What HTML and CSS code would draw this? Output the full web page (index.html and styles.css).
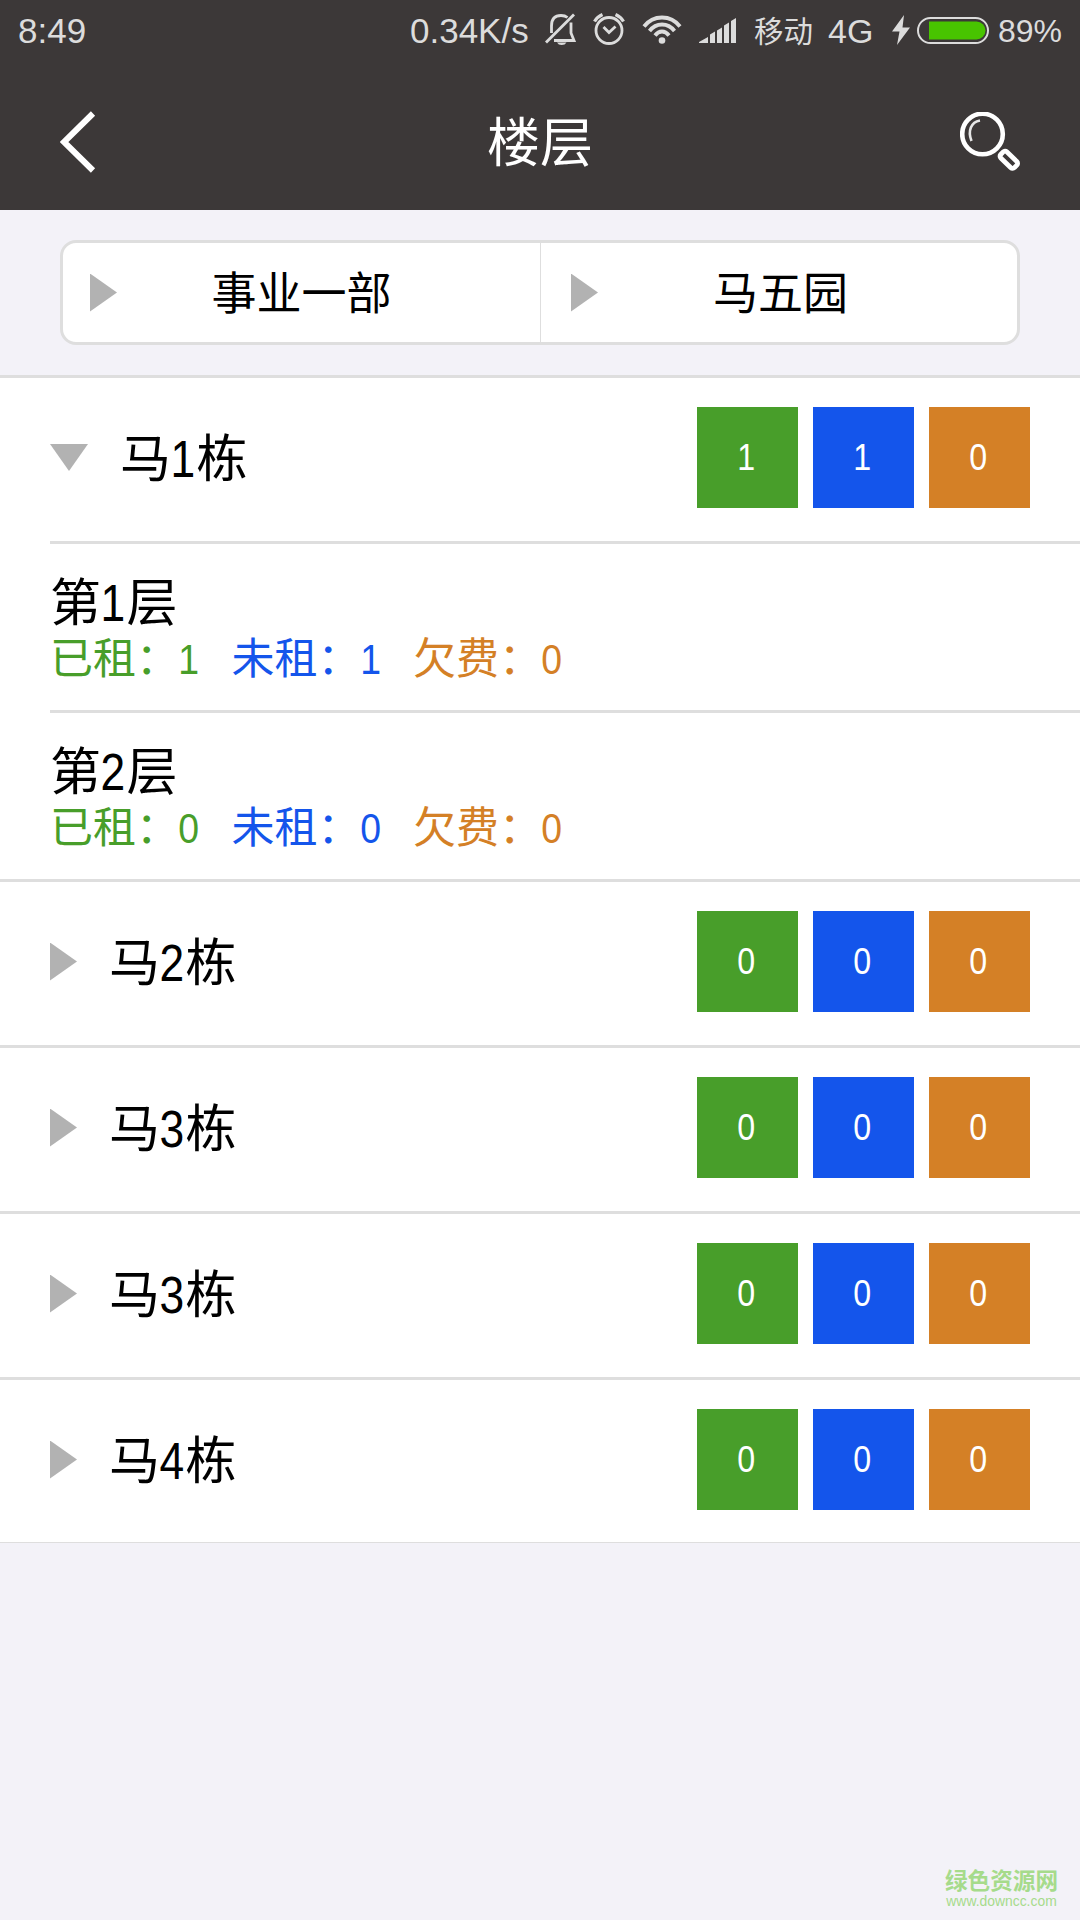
FILE: index.html
```html
<!DOCTYPE html>
<html lang="zh-CN">
<head>
    <meta charset="UTF-8">
    <meta name="viewport" content="width=device-width, initial-scale=1.0">
    <title>楼层</title>
    <link rel="stylesheet" href="styles.css">
</head>
<body>
    <header class="header">
        <div class="status-bar">
            <span class="time">8:49</span>
            <span class="speed">0.34K/s</span>
            <svg class="icon-bell" width="32" height="32" viewBox="0 0 32 32">
                <path d="M6.500 20V13C6.500 6 10 2.500 16 2.500Q20 2.500 22.500 4.500" fill="none" stroke="#dcdcdc" stroke-width="2.800"/>
                <path d="M26 9.500V20L29 27.500H9" fill="none" stroke="#dcdcdc" stroke-width="2.800"/>
                <path d="M1 29.500L29 1.500" stroke="#dcdcdc" stroke-width="2.800"/>
                <path d="M12 29.500H21.500Q20 32 16.700 32T12 29.500z" fill="#dcdcdc"/>
            </svg>
            <svg class="icon-alarm" width="32" height="32" viewBox="0 0 32 32">
                <circle cx="16" cy="17.500" r="13" fill="none" stroke="#dcdcdc" stroke-width="2.800"/>
                <path d="M10.500 14L16 19.500L22.500 13.500" fill="none" stroke="#dcdcdc" stroke-width="2.800"/>
                <path d="M1.500 8.500Q4 4 9.500 1.500M30.500 8.500Q28 4 22.500 1.500" fill="none" stroke="#dcdcdc" stroke-width="3.200"/>
            </svg>
            <svg class="icon-wifi" width="40" height="30" viewBox="0 0 40 30">
                <g fill="none" stroke="#dcdcdc" stroke-width="3.800">
                    <path d="M2 11.500Q9 2.500 20 2.500T38 11.500"/>
                    <path d="M7.500 16Q12.500 9.500 20 9.500T32.500 16"/>
                    <path d="M13 20.500Q16 16.500 20 16.500T27 20.500"/>
                </g>
                <circle cx="20" cy="25.500" r="3.300" fill="#dcdcdc"/>
            </svg>
            <svg class="icon-signal" width="37" height="25" viewBox="0 0 37 25">
                <path d="M0 25V24L9 19V25zM11 25V16.500L16 13.500V25zM18 25V12.500L23 9.500V25zM25 25V7.500L30 4.500V25zM32 25V3L37 0V25z" fill="#dcdcdc"/>
            </svg>
            <span class="carrier">移动</span>
            <span class="network">4G</span>
            <svg class="icon-bolt" width="18" height="30" viewBox="0 0 18 30">
                <path d="M12 0L0 16.500H7.500L5 30L18 12.500H10.500z" fill="#dcdcdc"/>
            </svg>
            <svg class="icon-battery" width="72" height="27" viewBox="0 0 72 27">
                <rect x="1" y="1" width="70" height="25" rx="12.500" fill="none" stroke="#dcdcdc" stroke-width="2"/>
                <path d="M12 4.500H59.500A9 9 0 0 1 59.500 22.500H12z" fill="#48c400"/>
            </svg>
            <span class="percent">89%</span>
        </div>
        <div class="nav-bar">
            <svg class="icon-back" width="36" height="62" viewBox="0 0 36 62">
                <path d="M33 2.500L4 31L33 59.500" fill="none" stroke="#fff" stroke-width="6"/>
            </svg>
            <h1>楼层</h1>
            <svg class="icon-search" width="60" height="60" viewBox="0 0 60 60">
                <circle cx="22.500" cy="22" r="20.300" fill="none" stroke="#fff" stroke-width="4.600"/>
                <path d="M20 8.500C11 10 7.500 19 11.500 29" fill="none" stroke="#e6e6e6" stroke-width="2.600"/>
                <rect x="-9.500" y="-4.300" width="19" height="8.600" rx="2.500" transform="translate(48.800 47.800) rotate(44)" fill="none" stroke="#fff" stroke-width="4.800"/>
            </svg>
        </div>
    </header>

    <div class="filter-bar">
        <div class="filter">
            <div class="filter-item">
                <i class="arrow-right"></i>
                <span>事业一部</span>
            </div>
            <div class="filter-item">
                <i class="arrow-right"></i>
                <span>马五园</span>
            </div>
        </div>
    </div>

    <main class="list">
        <section class="building">
            <div class="building-row">
                <i class="arrow-down"></i>
                <span class="name">马<b>1</b>栋</span>
                <span class="count green"><b>1</b></span>
                <span class="count blue"><b>1</b></span>
                <span class="count orange"><b>0</b></span>
            </div>
            <div class="floor">
                <div class="floor-name">第<b>1</b>层</div>
                <div class="floor-info">
                    <span class="rented">已租：<b>1</b></span>
                    <span class="vacant">未租：<b>1</b></span>
                    <span class="arrears">欠费：<b>0</b></span>
                </div>
            </div>
            <div class="floor">
                <div class="floor-name">第<b>2</b>层</div>
                <div class="floor-info">
                    <span class="rented">已租：<b>0</b></span>
                    <span class="vacant">未租：<b>0</b></span>
                    <span class="arrears">欠费：<b>0</b></span>
                </div>
            </div>
        </section>
        <section class="building">
            <div class="building-row">
                <i class="arrow-right"></i>
                <span class="name">马<b>2</b>栋</span>
                <span class="count green"><b>0</b></span>
                <span class="count blue"><b>0</b></span>
                <span class="count orange"><b>0</b></span>
            </div>
        </section>
        <section class="building">
            <div class="building-row">
                <i class="arrow-right"></i>
                <span class="name">马<b>3</b>栋</span>
                <span class="count green"><b>0</b></span>
                <span class="count blue"><b>0</b></span>
                <span class="count orange"><b>0</b></span>
            </div>
        </section>
        <section class="building">
            <div class="building-row">
                <i class="arrow-right"></i>
                <span class="name">马<b>3</b>栋</span>
                <span class="count green"><b>0</b></span>
                <span class="count blue"><b>0</b></span>
                <span class="count orange"><b>0</b></span>
            </div>
        </section>
        <section class="building">
            <div class="building-row">
                <i class="arrow-right"></i>
                <span class="name">马<b>4</b>栋</span>
                <span class="count green"><b>0</b></span>
                <span class="count blue"><b>0</b></span>
                <span class="count orange"><b>0</b></span>
            </div>
        </section>
    </main>

    <footer class="site-mark">
        <div class="site-name">绿色资源网</div>
        <div class="site-url">www.downcc.com</div>
    </footer>
</body>
</html>
```
FILE: styles.css
```css
* {
    box-sizing: border-box;
}
body {
    margin: 0;
    height: 1920px;
    display: flex;
    flex-direction: column;
    overflow: hidden;
    background-color: #f3f2f8;
    color: #000;
    font-family: "Noto Sans CJK SC", sans-serif;
}
svg {
    display: block;
    flex: none;
}
/* digits take half the width of a Chinese character */
b {
    display: inline-flex;
    justify-content: center;
    width: 0.5em;
    font-family: "Liberation Sans", Arial, sans-serif;
    font-weight: 400;
    line-height: 1;
    transform: translateX(-1px) scaleX(0.87);
}

/* header */
.header {
    height: 210px;
    background-color: #3c3838;
}
.status-bar {
    display: flex;
    align-items: flex-start;
    height: 74px;
    padding-left: 18px;
    color: #dcdcdc;
    font-family: "Liberation Sans", Arial, sans-serif;
    font-size: 35px;
    line-height: 62px;
    white-space: nowrap;
}
.time {
    width: 392px;
}
.speed {
    width: 135px;
}
.icon-bell {
    margin-top: 13px;
}
.icon-alarm {
    margin: 13px 0 0 16px;
}
.icon-wifi {
    margin: 15px 0 0 17px;
}
.icon-signal {
    margin: 18px 0 0 17px;
}
.carrier {
    width: 74px;
    margin-left: 18px;
    font-family: "Noto Sans CJK SC", sans-serif;
    font-size: 29.5px;
    line-height: 59px;
}
.network {
    width: 64px;
    font-size: 34px;
}
.icon-bolt {
    margin-top: 15px;
}
.icon-battery {
    margin: 17px 9px 0 7px;
}
.percent {
    font-size: 32px;
}
.nav-bar {
    display: flex;
    align-items: center;
    justify-content: space-between;
    height: 136px;
    padding: 0 60px;
}
.icon-back {
    margin-right: 24px;
}
.nav-bar h1 {
    margin: -6px 0 0;
    color: #fff;
    font-size: 53px;
    font-weight: 400;
    line-height: 72px;
}

/* filter */
.filter-bar {
    height: 165px;
    padding: 30px 60px;
}
.filter {
    display: flex;
    height: 105px;
    border: 3px solid #dedede;
    border-radius: 16px;
    background-color: #fff;
}
.filter-item {
    flex: none;
    display: flex;
    align-items: center;
    width: 477px;
    padding: 0 54px 0 27px;
    font-size: 45px;
    line-height: 66px;
}
.filter-item + .filter-item {
    padding-left: 30px;
    border-left: 1px solid #dedede;
}
.filter-item span {
    flex: 1;
    margin-top: -4px;
    text-align: center;
}
.arrow-right {
    flex: none;
    width: 27px;
    height: 38px;
    background-color: #b2b2b2;
    clip-path: polygon(0 0, 100% 50%, 0 100%);
}
.arrow-down {
    flex: none;
    width: 38px;
    height: 27px;
    background-color: #b2b2b2;
    clip-path: polygon(0 0, 100% 0, 50% 100%);
}

/* buildings */
.list {
    border-bottom: 1px solid #dedede;
    background-color: #fff;
}
.building {
    border-top: 3px solid #dedede;
}
.building-row {
    display: flex;
    align-items: center;
    gap: 15px;
    height: 163px;
    padding: 29px 50px 33px;
}
.building:last-child .building-row {
    height: 162px;
    padding-bottom: 32px;
}
.name {
    flex: 1;
    margin: -5px 0 0 17px;
    font-size: 51px;
    line-height: 72px;
}
.count {
    display: flex;
    align-items: center;
    justify-content: center;
    width: 101px;
    height: 101px;
    color: #fff;
    font-size: 37px;
}
.green {
    background-color: #489e2a;
}
.blue {
    background-color: #1455eb;
}
.orange {
    background-color: #d48026;
}

/* floors */
.floor {
    height: 169px;
    margin-left: 50px;
    padding-top: 25px;
    border-top: 3px solid #dedede;
}
.floor-name {
    height: 60px;
    font-size: 51px;
    line-height: 60px;
}
.floor-info {
    display: flex;
    gap: 31px;
    height: 52px;
    font-size: 43px;
    line-height: 52px;
}
.rented {
    color: #489e2a;
}
.vacant {
    color: #1455eb;
}
.arrears {
    color: #d48026;
}

/* site mark */
.site-mark {
    margin: auto 22px 11px auto;
    color: #a6db8b;
    text-align: center;
}
.site-name {
    font-size: 22.6px;
    font-weight: 700;
    line-height: 26px;
}
.site-url {
    font-family: "Liberation Sans", Arial, sans-serif;
    font-size: 13.9px;
    line-height: 16px;
}
```
